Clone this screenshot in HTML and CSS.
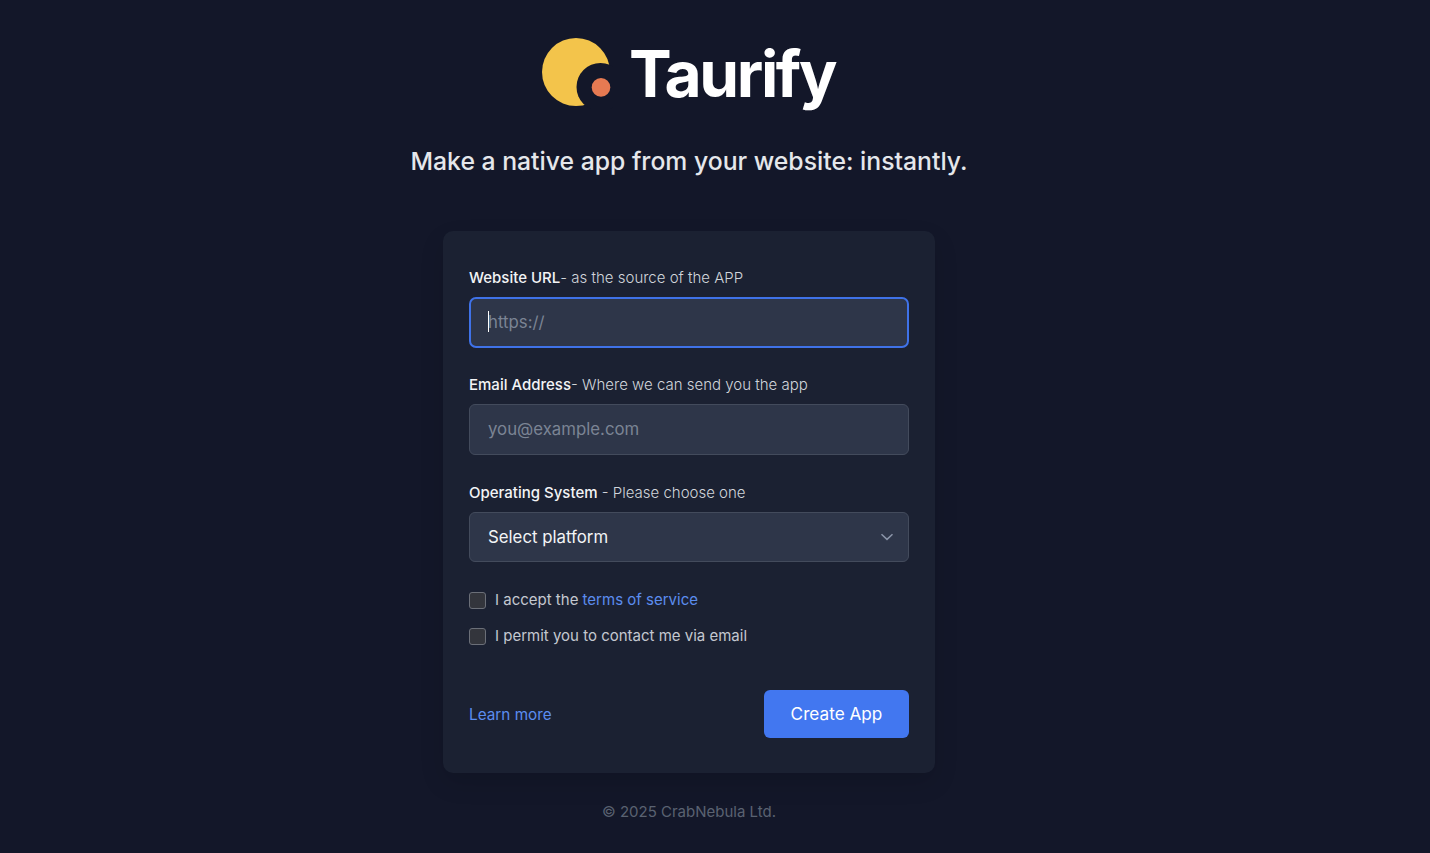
FILE: index.html
```html
<!DOCTYPE html>
<html lang="en">
<head>
    <meta charset="UTF-8">
    <meta name="viewport" content="width=device-width, initial-scale=1.0">
    <title>Taurify</title>
    <link rel="stylesheet" href="styles.css">
</head>
<body>
    <main class="page">
        <header class="brand">
            <svg class="logo" width="72" height="72" viewBox="0 0 72 72">
                <circle cx="35" cy="35" r="34" fill="#f3c44b"/>
                <circle cx="59.5" cy="50" r="24" fill="#131729"/>
                <circle cx="60" cy="50.4" r="9.3" fill="#e67a52"/>
            </svg>
            <h1 class="brand-name">Taurify</h1>
        </header>
        <p class="tagline">Make a native app from your website: instantly.</p>

        <form class="card">
            <div class="field">
                <label class="label"><b>Website URL</b>- as the source of the APP</label>
                <div class="input input-focus"><span class="caret"></span><span class="placeholder">https://</span></div>
            </div>
            <div class="field">
                <label class="label"><b>Email Address</b>- Where we can send you the app</label>
                <div class="input"><span class="placeholder">you@example.com</span></div>
            </div>
            <div class="field">
                <label class="label"><b>Operating System</b> - Please choose one</label>
                <div class="input select">
                    <span>Select platform</span>
                    <svg class="chevron" width="14" height="14" viewBox="0 0 14 14" fill="none"><path d="M1.5 4.2l5.5 5.2 5.5-5.2" stroke="#8a94a8" stroke-width="1.5"/></svg>
                </div>
            </div>
            <div class="check-row"><span class="check"></span><span>I accept the <a class="link" href="#">terms of service</a></span></div>
            <div class="check-row"><span class="check"></span><span>I permit you to contact me via email</span></div>
            <div class="actions">
                <a class="link learn" href="#">Learn more</a>
                <button class="button" type="button">Create App</button>
            </div>
        </form>

        <footer class="footer">© 2025 CrabNebula Ltd.</footer>
    </main>
</body>
</html>
```

FILE: styles.css
```css
* {
    box-sizing: border-box;
}
body {
    margin: 0;
    background: #131729;
    color: white;
    font-family: Inter, "Liberation Sans", sans-serif;
}
.page {
    width: 1378px;
    height: 853px;
    padding-top: 37px;
    display: flex;
    flex-direction: column;
    align-items: center;
}
.brand {
    display: flex;
    align-items: center;
    gap: 16px;
    height: 72px;
    margin-right: 2px;
}
.logo {
    display: block;
}
.brand-name {
    margin: 1px 0 0;
    font-size: 64px;
    font-weight: 700;
    line-height: 72px;
    letter-spacing: -2.4px;
    font-variant-ligatures: none;
}
.tagline {
    margin: 35px 0 0;
    font-size: 24.75px;
    font-weight: 500;
    line-height: 34px;
    color: #e5e7eb;
}
.card {
    width: 492px;
    height: 542px;
    margin-top: 53px;
    padding: 36px 26px 0;
    background: #1b2132;
    border-radius: 10px;
    box-shadow: 0 10px 25px rgba(0, 0, 0, 0.12);
}
.field {
    margin-bottom: 27px;
}
.label {
    display: block;
    height: 20px;
    margin-bottom: 10px;
    font-size: 15px;
    line-height: 21px;
    font-weight: 300;
    color: #d1d5db;
}
.label b {
    font-weight: 500;
    color: #f3f4f6;
}
.input {
    display: flex;
    align-items: center;
    position: relative;
    height: 51px;
    padding: 0 18px 1px;
    background: #2e3649;
    border: 1px solid #434b5c;
    border-radius: 6px;
    font-size: 16.8px;
}
.input-focus {
    margin-bottom: -1px;
    border: 2px solid #3f72e8;
    padding: 0 17px 1px;
    border-radius: 7px;
}
.caret {
    position: absolute;
    left: 17px;
    top: 12px;
    width: 1px;
    height: 21px;
    background: white;
}
.placeholder {
    color: #7b8494;
}
.select {
    justify-content: space-between;
    height: 50px;
    color: #f3f4f6;
    padding: 0 14px 0 18px;
}
.check-row {
    display: flex;
    align-items: center;
    gap: 9px;
    height: 20px;
    margin-bottom: 16px;
    font-size: 15px;
    color: #c4c8d0;
}
.check {
    width: 17px;
    height: 17px;
    margin-top: 2px;
    background: #33353c;
    border: 1px solid #6b6f78;
    border-radius: 3px;
}
.link {
    color: #5b8def;
    text-decoration: none;
}
.learn {
    font-size: 15.3px;
}
.actions {
    display: flex;
    justify-content: space-between;
    align-items: center;
    margin-top: 45px;
}
.button {
    width: 145px;
    height: 48px;
    background: #4277f0;
    color: white;
    border: none;
    border-radius: 6px;
    font-family: inherit;
    font-size: 17.2px;
    padding-bottom: 2px;
}
.footer {
    margin-top: 29px;
    font-size: 15px;
    line-height: 20px;
    color: #5a6271;
}
```
